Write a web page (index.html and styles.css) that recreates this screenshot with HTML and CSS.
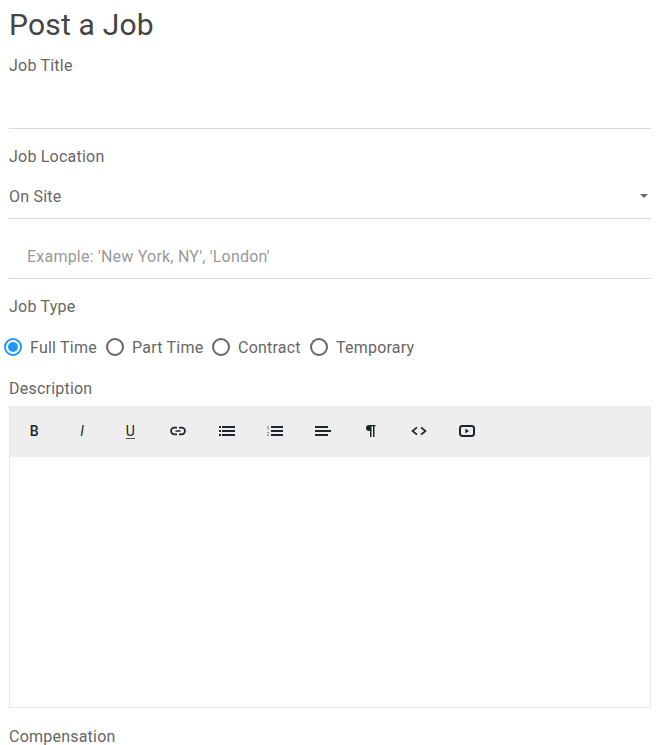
FILE: index.html
```html
<!DOCTYPE html>
<html lang="en">
<head>
<meta charset="utf-8">
<title>Post a Job</title>
<link rel="stylesheet" href="styles.css">
</head>
<body>
<form class="job-form">
  <h1 class="title">Post a Job</h1>
  <div class="label">Job Title</div>
  <div class="field field-title"></div>
  <div class="label label-location">Job Location</div>
  <div class="field field-select"><span>On Site</span><span class="caret"></span></div>
  <div class="field field-place">Example: 'New York, NY', 'London'</div>
  <div class="label label-type">Job Type</div>
  <div class="radios">
    <div class="option option-full"><span class="radio checked"></span>Full Time</div>
    <div class="option option-part"><span class="radio"></span>Part Time</div>
    <div class="option option-contract"><span class="radio"></span>Contract</div>
    <div class="option"><span class="radio"></span>Temporary</div>
  </div>
  <div class="label label-description">Description</div>
  <div class="editor">
    <div class="toolbar">
      <span class="tool bold">B</span>
      <span class="tool italic">I</span>
      <span class="tool underline"><span class="u">U</span></span>
      <span class="tool"><svg width="18" height="18" viewBox="0 0 18 18"><path d="M8 5.7H5.3a3.3 3.3 0 0 0 0 6.6H8M10 5.7h2.7a3.3 3.3 0 0 1 0 6.6H10M6.5 9h5" fill="none" stroke="#212529" stroke-width="1.7"/></svg></span>
      <span class="tool"><svg width="18" height="18" viewBox="0 0 18 18"><path d="M4 4h13v2H4zM4 8h13v2H4zM4 12h13v2H4zM1 4h2v2H1zM1 8h2v2H1zM1 12h2v2H1z" fill="#212529"/></svg></span>
      <span class="tool"><svg width="18" height="18" viewBox="0 0 18 18"><path d="M5 4h12v2H5zM5 8h12v2H5zM5 12h12v2H5z" fill="#212529"/><path d="M1.3 4.8l1-.5V8M1 10.5h1.6v1.2L1.2 13.5h1.6" fill="none" stroke="#777a7d" stroke-width=".8"/></svg></span>
      <span class="tool"><svg width="18" height="18" viewBox="0 0 18 18"><path d="M1 4h13v2H1zM1 8h16v2H1zM1 12h13v2H1z" fill="#212529"/></svg></span>
      <span class="tool"><svg width="18" height="18" viewBox="0 0 18 18"><path d="M13.5 3H7a3 3 0 0 0 0 6h1v6h1.5V4.2H11V15h1.5V4.2h1z" fill="#212529"/></svg></span>
      <span class="tool"><svg width="18" height="18" viewBox="0 0 18 18"><path d="M7 5.3L2.5 9 7 12.7M11 5.3L15.5 9 11 12.7" fill="none" stroke="#212529" stroke-width="1.7"/></svg></span>
      <span class="tool"><svg width="18" height="18" viewBox="0 0 18 18"><rect x="2" y="4" width="14" height="10" rx="2.4" fill="none" stroke="#212529" stroke-width="2"/><path d="M7.3 6.8v4.4L11.2 9z" fill="#212529"/></svg></span>
    </div>
  </div>
  <div class="label label-compensation">Compensation</div>
</form>
</body>
</html>
```

FILE: styles.css
```css
* { box-sizing: border-box; }
body {
  margin: 0;
  background: #fff;
  color: #666;
  font: 16px/24px Roboto, sans-serif;
  letter-spacing: 0.22px;
  overflow: hidden;
}
.job-form { padding: 0 8px 0 9px; height: 745px; overflow: hidden; }
.title {
  margin: 0;
  padding-top: 7px;
  height: 53px;
  font-size: 30px;
  line-height: 36px;
  font-weight: 400;
  letter-spacing: 0.2px;
  color: #444;
}
.label { height: 24px; padding-top: 1px; }
.field { border-bottom: 1px solid #dadada; }
.field-title { height: 52px; }
.label-location { margin-top: 15px; }
.field-select {
  height: 51px;
  padding: 17px 3px 0 0;
  display: flex;
  justify-content: space-between;
}
.caret {
  margin-top: 9px;
  width: 0;
  height: 0;
  border: 4px solid transparent;
  border-top-color: #666;
  border-bottom: 0;
}
.field-place { height: 60px; padding: 26px 0 0 18px; color: #999; }
.label-type { margin-top: 15px; }
.radios { display: flex; margin: 18px 0 0 -5px; height: 24px; }
.option { display: flex; align-items: center; white-space: nowrap; }
.option-full { width: 102px; }
.option-part { width: 106px; }
.option-contract { width: 98px; }
.radio {
  display: flex;
  align-items: center;
  justify-content: center;
  width: 18px;
  height: 18px;
  margin: 0 8px 2px 0;
  border: 2px solid #666;
  border-radius: 50%;
}
.radio.checked { border-color: #2196f3; }
.checked::after {
  content: "";
  width: 10px;
  height: 10px;
  border-radius: 50%;
  background: #2196f3;
}
.label-description { margin-top: 16px; }
.editor { margin-top: 6px; height: 302px; border: 1px solid #e9e9e9; }
.toolbar {
  display: flex;
  height: 50px;
  padding-bottom: 2px;
  background: #eee;
  color: #212529;
  font-size: 14px;
}
.tool {
  width: 48.15px;
  display: flex;
  align-items: center;
  justify-content: center;
  letter-spacing: 0;
}
.bold { font-weight: 500; }
.italic { font-style: italic; }
.u { line-height: 14px; border-bottom: 1px solid #555; }
.label-compensation { margin-top: 16px; }
```
